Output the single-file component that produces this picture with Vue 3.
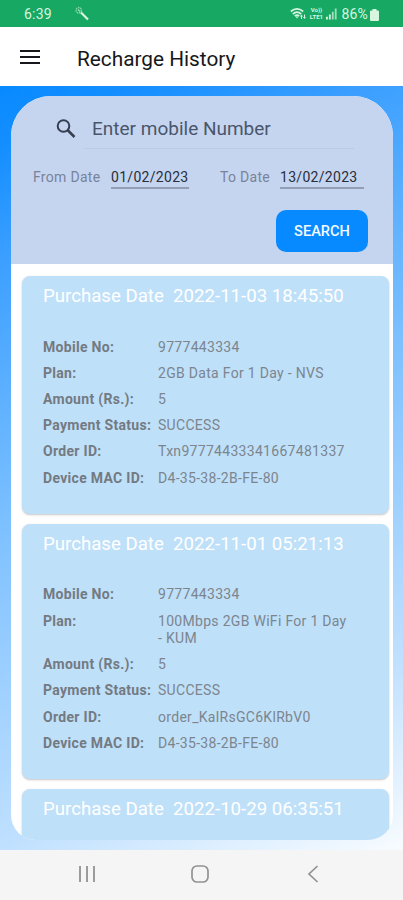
<template>
  <div class="screen">
    <div class="status-bar">
      <span class="clock">6:39</span>
      <svg class="wand" width="16" height="16" viewBox="0 0 16 16" fill="none" stroke="currentColor">
        <circle cx="4.8" cy="4.3" r="2.7" stroke-width="1.5" stroke-dasharray="1.6 .7" opacity=".55"></circle>
        <path d="M4 3.5l2 2" stroke-width="1.5" opacity=".65"></path>
        <path d="M7 6.500l7 7" stroke-width="2.200"></path>
      </svg>
      <div class="status-right">
        <svg class="wifi" width="17" height="14" viewBox="0 0 17 14" fill="none" stroke="currentColor" stroke-width="1.7">
          <path d="M.8 4.5Q7 -.8 13.2 4.5M2.8 7Q7 3.3 11.2 7M4.8 9Q7 7.1 9.2 9"></path>
          <path d="M5.5 9.5h3L7 11.5zM10 9.5l1.5-2L13 9.5zM13 10l1.5 2L16 10z" fill="currentColor" stroke="none"></path>
          <path d="M11.5 9v3M14.5 7.5v3" stroke-width="1"></path>
        </svg>
        <span class="volte"><span>Vo))</span><span>LTE1</span></span>
        <svg class="signal" width="11" height="12" viewBox="0 0 12 12" fill="currentColor">
          <path d="M0 9h2v3H0zM3.2 6.5h2V12h-2z"></path>
          <path d="M6.4 3.5h2V12h-2zM9.6 0h2v12h-2z" opacity=".7"></path>
        </svg>
        <span class="percent">86%</span>
        <svg class="battery" width="9" height="12" viewBox="0 0 9 12" fill="currentColor">
          <path d="M2.5 0h4v1.5H8q1 0 1 1V11q0 1-1 1H1q-1 0-1-1V2.5q0-1 1-1h1.5z"></path>
        </svg>
      </div>
    </div>

    <header class="app-bar">
      <button class="menu-btn" aria-label="Menu">
        <svg width="20" height="14" viewBox="0 0 20 14" stroke="currentColor" stroke-width="2">
          <path d="M0 1h20M0 7h20M0 13h20"></path>
        </svg>
      </button>
      <h1>Recharge History</h1>
    </header>

    <main class="content">
      <div class="panel">
        <section class="filters">
          <label class="search-field">
            <svg width="20" height="20" viewBox="0 0 20 20" fill="none" stroke="currentColor">
              <circle cx="7.5" cy="7" r="5.8" stroke-width="2"></circle>
              <path d="M11.5 11l7 7" stroke-width="2.5"></path>
            </svg>
            <input v-model="mobile" type="text" placeholder="Enter mobile Number" />
          </label>
          <div class="dates">
            <span class="date-label">From Date</span>
            <span class="date-value from">{{ fromDate }}</span>
            <span class="date-label to-label">To Date</span>
            <span class="date-value to">{{ toDate }}</span>
          </div>
          <button class="search-btn">SEARCH</button>
        </section>

        <section class="records">
          <article v-for="record in records" :key="record.date" class="card">
            <h2>Purchase Date&nbsp; {{ record.date }}</h2>
            <dl v-if="record.fields.length">
              <div v-for="[label, value] in record.fields" :key="label" class="row">
                <dt>{{ label }}</dt>
                <dd>{{ value }}</dd>
              </div>
            </dl>
          </article>
        </section>
      </div>
    </main>

    <nav class="nav-bar">
      <button aria-label="Recents">
        <svg width="18" height="18" viewBox="0 0 18 18" stroke="currentColor" stroke-width="1.8">
          <path d="M2 1v16M9 1v16M16 1v16"></path>
        </svg>
      </button>
      <button aria-label="Home">
        <svg width="18" height="18" viewBox="0 0 18 18" fill="none" stroke="currentColor" stroke-width="1.7">
          <rect x="1" y="1" width="16" height="16" rx="5"></rect>
        </svg>
      </button>
      <button aria-label="Back">
        <svg width="18" height="18" viewBox="0 0 18 18" fill="none" stroke="currentColor" stroke-width="1.7">
          <path d="M13.5 1L5 9l8.5 8"></path>
        </svg>
      </button>
    </nav>
  </div>
</template>

<script setup>
import { ref } from 'vue'

const mobile = ref('')
const fromDate = ref('01/02/2023')
const toDate = ref('13/02/2023')

const records = ref([
  {
    date: '2022-11-03 18:45:50',
    fields: [
      ['Mobile No:', '9777443334'],
      ['Plan:', '2GB Data For 1 Day - NVS'],
      ['Amount (Rs.):', '5'],
      ['Payment Status:', 'SUCCESS'],
      ['Order ID:', 'Txn97774433341667481337'],
      ['Device MAC ID:', 'D4-35-38-2B-FE-80']
    ]
  },
  {
    date: '2022-11-01 05:21:13',
    fields: [
      ['Mobile No:', '9777443334'],
      ['Plan:', '100Mbps 2GB WiFi For 1 Day - KUM'],
      ['Amount (Rs.):', '5'],
      ['Payment Status:', 'SUCCESS'],
      ['Order ID:', 'order_KalRsGC6KlRbV0'],
      ['Device MAC ID:', 'D4-35-38-2B-FE-80']
    ]
  },
  {
    date: '2022-10-29 06:35:51',
    fields: []
  }
])
</script>

<style>
body {
  margin: 0;
}
</style>

<style scoped>
.screen {
  display: flex;
  flex-direction: column;
  width: 403px;
  height: 900px;
  overflow: hidden;
  font-family: Roboto, 'Liberation Sans', sans-serif;
  background: #fff;
}

.screen * {
  box-sizing: border-box;
}

button {
  display: flex;
  align-items: center;
  justify-content: center;
  padding: 0;
  border: none;
  background: none;
  color: inherit;
  font-family: inherit;
}

.status-bar {
  display: flex;
  align-items: center;
  height: 27px;
  padding: 0 24px 0 24px;
  background: #17a864;
  color: #d8f5df;
  flex-shrink: 0;
}

.clock {
  width: 50px;
  font-size: 14px;
  letter-spacing: 0.2px;
}

.status-right {
  display: flex;
  align-items: center;
  margin-left: auto;
}

.volte {
  display: flex;
  flex-direction: column;
  gap: 1px;
  width: 16px;
  margin-left: 1px;
  font-size: 6px;
  line-height: 6px;
  font-weight: 700;
  text-align: center;
}

.signal {
  margin-left: 2px;
}

.percent {
  margin: 0 2px 0 4px;
  font-size: 14px;
  letter-spacing: 0.2px;
}

.battery {
  margin-top: 2px;
}

.app-bar {
  display: flex;
  align-items: center;
  height: 59px;
  padding-left: 20px;
  color: #17171b;
  flex-shrink: 0;
}

.menu-btn {
  width: 20px;
  height: 20px;
  margin-right: 37px;
}

h1 {
  margin: 4px 0 0;
  font-size: 20.8px;
  font-weight: 400;
}

.content {
  height: 764px;
  padding: 10px 10px 10px 11px;
  background: linear-gradient(155deg, #078aff 0%, #168fff 7%, #3b9fff 18%, #7cc0ff 46%, #c0e0ff 80%, #f8fcff 100%);
  flex-shrink: 0;
}

.panel {
  height: 744px;
  overflow: hidden;
  border-radius: 40px 40px 25px 25px;
  background: #fff;
}

.filters {
  height: 168px;
  padding: 12px 21px 0 22px;
  background: #c5d5f0;
}

.search-field {
  display: flex;
  align-items: center;
  height: 41px;
  padding-left: 23px;
  color: #363e50;
}

.search-field input {
  width: 270px;
  height: 41px;
  margin-left: 8px;
  padding: 0 0 0 8px;
  border: none;
  border-bottom: 1px solid #bccae4;
  outline: none;
  background: transparent;
  font-family: inherit;
  font-size: 19px;
}

.search-field input::placeholder {
  color: #4b566b;
  opacity: 1;
}

.dates {
  display: flex;
  align-items: center;
  height: 24px;
  margin-top: 16px;
  font-size: 14px;
  letter-spacing: 0.3px;
}

.date-label {
  width: 78px;
  color: #78839a;
}

.to-label {
  width: 60px;
  margin-left: 31px;
}

.date-value {
  width: 78px;
  height: 24px;
  border-bottom: 2px solid #929eb5;
  line-height: 24px;
  color: #272e3c;
}

.date-value.to {
  width: 84px;
}

.search-btn {
  width: 92px;
  height: 42px;
  margin: 21px 4px 0 auto;
  border-radius: 10px;
  background: #078aff;
  color: #f4faff;
  font-size: 14.6px;
  font-weight: 500;
}

.records {
  display: flex;
  flex-direction: column;
  gap: 10px;
  padding: 12px 4px 0 11px;
}

.card {
  padding: 7px 21px 27px;
  border-radius: 8px;
  background: #bfe0f9;
  box-shadow: 0 1px 2px rgba(70, 60, 60, 0.3);
}

.card:last-child {
  height: 75px;
}

h2 {
  margin: 0;
  font-size: 18.65px;
  line-height: 26px;
  font-weight: 400;
  color: #fff;
  white-space: nowrap;
}

dl {
  display: flex;
  flex-direction: column;
  gap: 8.8px;
  margin: 29.5px 0 0;
}

.row {
  display: grid;
  grid-template-columns: 115px 192px;
  font-size: 14px;
  line-height: 17.4px;
  letter-spacing: 0.3px;
  color: #7c858e;
}

dt {
  font-weight: 700;
  color: #737a82;
  white-space: nowrap;
}

dd {
  margin: 0;
}

.nav-bar {
  display: flex;
  align-items: center;
  gap: 95px;
  height: 50px;
  padding: 0 0 2px 78px;
  background: #f5f5f5;
  color: #929292;
  flex-shrink: 0;
}

.nav-bar button {
  width: 18px;
  height: 18px;
}
</style>
